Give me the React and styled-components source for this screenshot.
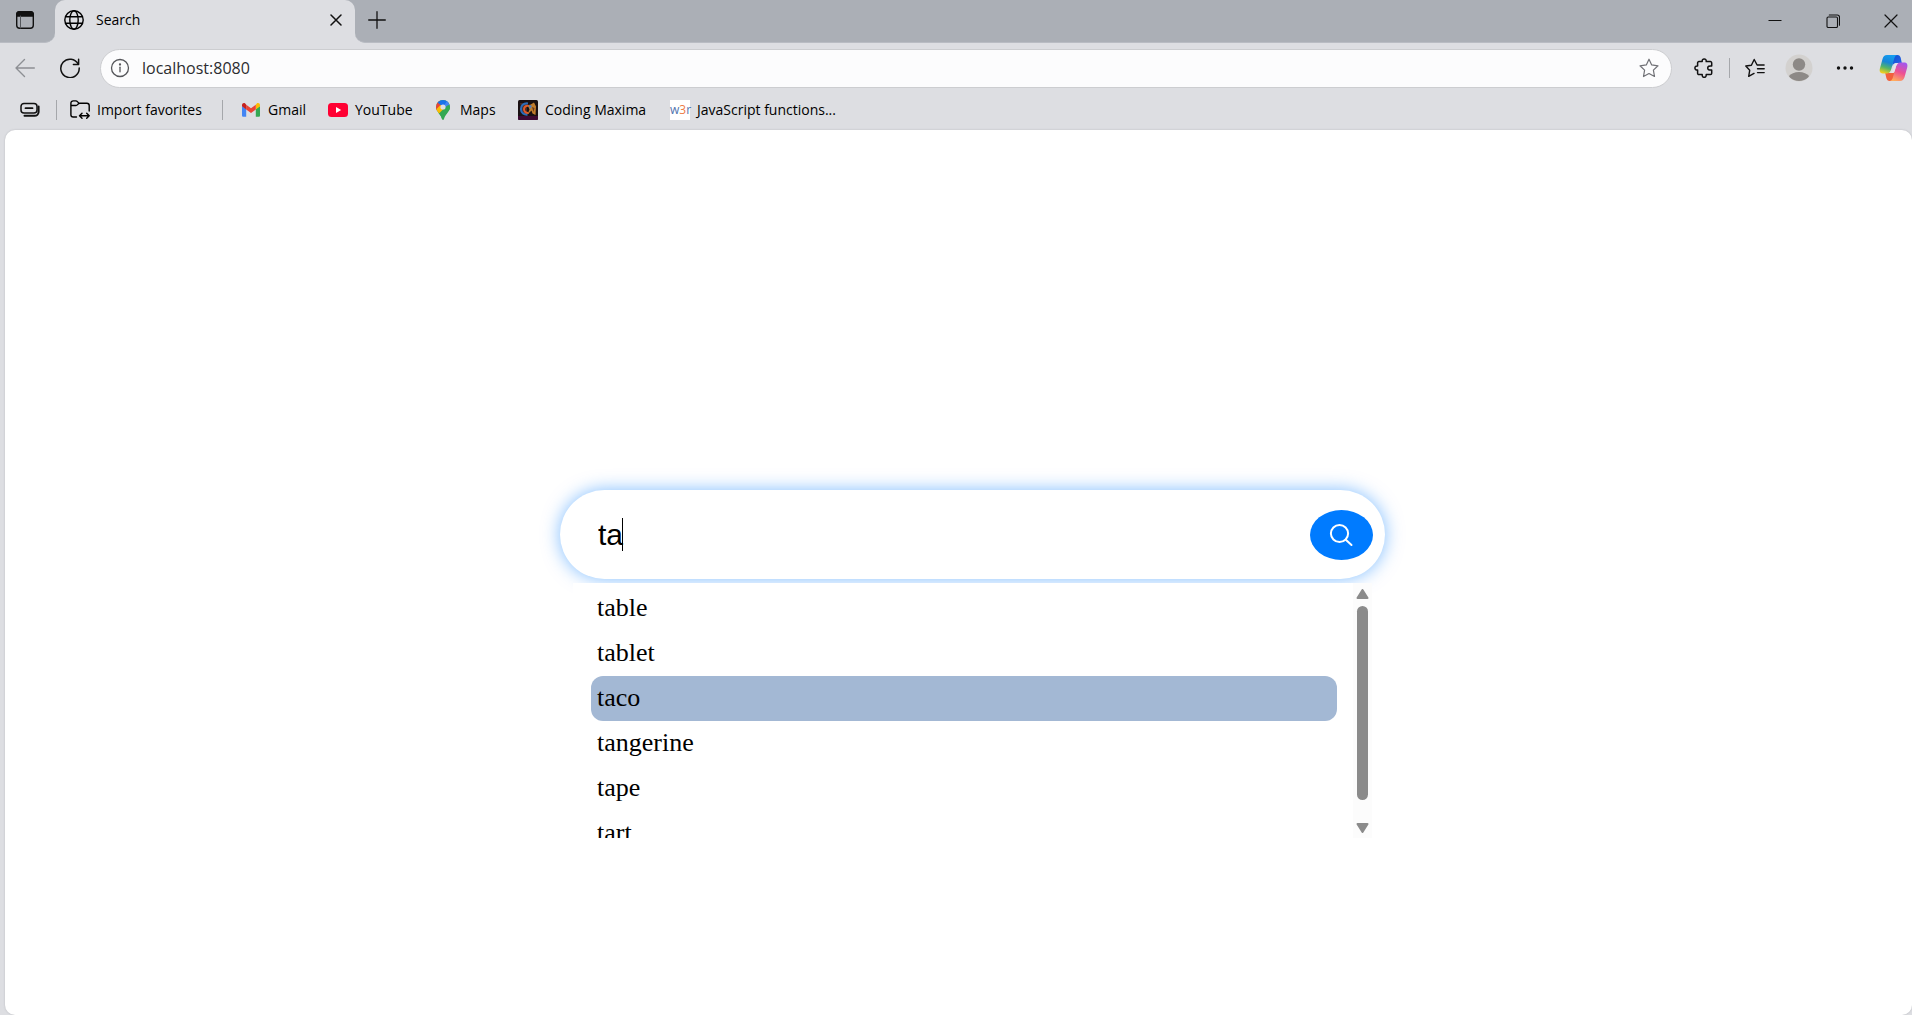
import React, { useState } from "react";
import styled, { createGlobalStyle } from "styled-components";

const Global = createGlobalStyle`
  *, *::before, *::after { box-sizing: border-box; }
  html, body { margin: 0; }
  body {
    background: #dddee2;
    color: #000;
    font-family: "Open Sans", "Noto Sans", sans-serif;
    font-size: 14px;
    overflow: hidden;
  }
`;

const Browser = styled.div`
  display: flex;
  flex-direction: column;
  height: 100vh;
`;

const IconButton = styled.button`
  display: grid;
  place-items: center;
  flex: none;
  width: ${(p) => p.$width || 20}px;
  height: ${(p) => p.$height || 20}px;
  padding: 0;
  margin: 0 0 0 ${(p) => p.$before || 0}px;
  border: 0;
  background: none;
  color: ${(p) => p.$color || "#111"};
  svg { display: block; }
`;

const TabStrip = styled.header`
  display: flex;
  flex: none;
  height: 43px;
`;

const StripStart = styled.div`
  display: flex;
  align-items: center;
  width: 55px;
  padding: 0 0 3px 15px;
  background: #abafb6;
  border-bottom: 1px solid #b9bcc3;
  border-bottom-right-radius: 10px;
`;

const TabHolder = styled.div`
  flex: none;
  width: 300px;
  height: 33px;
  background: #abafb6;
`;

const Tab = styled.div`
  display: flex;
  align-items: center;
  height: 43px;
  padding: 0 9px 3px 9px;
  background: #dddee2;
  border-radius: 10px 10px 0 0;
`;

const TabTitle = styled.span`
  flex: 1;
  padding-left: 12px;
  line-height: 20px;
`;

const StripEnd = styled.div`
  display: flex;
  flex: 1;
  align-items: center;
  justify-content: space-between;
  padding: 0 11px 3px 12px;
  background: #abafb6;
  border-bottom: 1px solid #b9bcc3;
  border-bottom-left-radius: 10px;
`;

const WindowControls = styled.div`
  display: flex;
  gap: 38px;
  padding-top: 3px;
`;

const Toolbar = styled.nav`
  display: flex;
  align-items: center;
  flex: none;
  height: 50px;
  padding: 0 4px 0 15px;
`;

const NavButtons = styled.div`
  display: flex;
  gap: 25px;
  padding-right: 20px;
`;

const AddressBar = styled.label`
  display: flex;
  align-items: center;
  flex: 1;
  height: 39px;
  padding: 0 12px 0 9px;
  background: #fcfcfd;
  border: 1px solid #cccdd0;
  border-radius: 20px;
`;

const AddressInput = styled.input`
  flex: 1;
  min-width: 0;
  height: 30px;
  padding: 0 0 0 12px;
  border: 0;
  outline: 0;
  background: none;
  color: #2c2c30;
  font-family: inherit;
  font-size: 16px;
`;

const ToolbarActions = styled.div`
  display: flex;
  align-items: center;
  padding-left: 22px;
`;

const Divider = styled.span`
  flex: none;
  width: 1px;
  height: 20px;
  margin: ${(p) => p.$margin};
  background: #a5a7ab;
`;

const Bookmarks = styled.nav`
  display: flex;
  align-items: center;
  flex: none;
  height: 37px;
  padding: 0 20px 3px;
`;

const Bookmark = styled.a`
  display: flex;
  align-items: center;
  gap: 7px;
  flex: none;
  width: ${(p) => p.$width}px;
  color: inherit;
  line-height: 20px;
  text-decoration: none;
  white-space: nowrap;
  svg { flex: none; display: block; }
`;

const SiteMark = styled.span`
  display: grid;
  place-items: center;
  flex: none;
  width: 20px;
  height: 20px;
  background: #fff;
  color: #4f72ae;
  font-size: 12px;
  line-height: 20px;
  b { color: #ee7c45; font-weight: 400; }
`;

const Page = styled.main`
  display: flex;
  flex-direction: column;
  align-items: center;
  flex: 1;
  min-height: 0;
  margin-left: 5px;
  padding: 360px 0 0 28px;
  background: #fff;
  border-radius: 10px;
  box-shadow: 0 0 2px #b4b5ba;
`;

const SearchForm = styled.form`
  position: relative;
  display: flex;
  align-items: center;
  width: 100%;
  max-width: 825px;
  height: 89px;
  padding: 0 12px 0 38px;
  background: #fff;
  border-radius: 45px;
  box-shadow: 0 0 18px rgba(0, 123, 255, 0.5);
`;

const SearchInput = styled.input`
  flex: 1;
  min-width: 0;
  height: 50px;
  padding: 0;
  border: 0;
  outline: 0;
  background: none;
  color: #000;
  caret-color: transparent;
  font-family: "Liberation Sans", Arial, sans-serif;
  font-size: 30px;
`;

const Caret = styled.span`
  position: absolute;
  top: 28px;
  left: 62px;
  width: 1px;
  height: 33px;
  background: #000;
`;

const SearchButton = styled.button`
  display: grid;
  place-items: center;
  width: 63px;
  height: 50px;
  padding: 0 2px 0 0;
  border: 0;
  border-radius: 50%;
  background: #007bff;
  color: #fff;
`;

const Results = styled.div`
  position: relative;
  display: flex;
  width: 100%;
  max-width: 799px;
  height: 255px;
  margin-top: 4px;
  background: #fff;
`;

const ResultList = styled.ul`
  flex: 1;
  margin: 0;
  padding: 3px 16px 0 18px;
  overflow: hidden;
  list-style: none;
  font-family: "Liberation Serif", "Times New Roman", serif;
  font-size: 26px;
`;

const ResultItem = styled.li`
  height: 45px;
  padding: 0 6px;
  border-radius: 12px;
  background: ${(p) => (p.$active ? "#a3b8d4" : "transparent")};
  line-height: 44px;
`;

const Scrollbar = styled.div`
  display: flex;
  flex-direction: column;
  align-items: center;
  justify-content: space-between;
  width: 19px;
  padding: 6px 0 5px;
  background: #fcfcfc;
`;

const Track = styled.div`
  flex: 1;
  width: 11px;
  padding: 7px 0 23px;
`;

const Thumb = styled.div`
  height: 100%;
  border-radius: 6px;
  background: #8b8b8b;
`;

const Svg = ({ size = 20, sw = 1.4, children, ...rest }) => (
  <svg
    width={size}
    height={size}
    viewBox={`0 0 ${size} ${size}`}
    fill="none"
    stroke="currentColor"
    strokeWidth={sw}
    strokeLinecap="round"
    strokeLinejoin="round"
    aria-hidden="true"
    {...rest}
  >
    {children}
  </svg>
);

const TabsIcon = () => (
  <Svg>
    <rect x="1.7" y="1.7" width="16.6" height="16.6" rx="3" />
    <path d="M1.7 6V4.5a3 3 0 0 1 3-2.8h10.6a3 3 0 0 1 3 2.8V6z" fill="currentColor" />
    <path d="M5.5 6v12" stroke="#55585d" strokeWidth="1" />
  </Svg>
);

const GlobeIcon = () => (
  <Svg>
    <circle cx="10" cy="10" r="9.2" />
    <ellipse cx="10" cy="10" rx="4.2" ry="9.2" />
    <path d="M1.6 6.8h16.8M1.6 13.2h16.8" />
  </Svg>
);

const InfoIcon = () => (
  <Svg sw={1.3}>
    <circle cx="10" cy="10" r="8.5" />
    <path d="M10 9.2v4.6" />
    <circle cx="10" cy="6.5" r=".5" fill="currentColor" />
  </Svg>
);

const ReloadIcon = () => (
  <Svg sw={1.5}>
    <path d="M18.2 6.2A9.2 9.2 0 1 0 19.2 10" />
    <path d="M18.6 1.2v5.2h-5.2" />
  </Svg>
);

const StarIcon = () => (
  <Svg sw={1.2}>
    <path d="M10 1.2l2.7 5.7 6.3.9-4.6 4.3 1.1 6.4-5.5-3-5.5 3 1.1-6.4L1 7.8l6.3-.9z" />
  </Svg>
);

const PuzzleIcon = () => (
  <Svg sw={1.5}>
    <path d="M4.9 3.600H8.200C8 1.900 8.800.9 10.200.9s2.200 1 2 2.700h4.200a1.300 1.300 0 0 1 1.300 1.300v3.100c-2.600-.4-4 .4-4 2s1.400 2.400 4 2v3.300a1.300 1.300 0 0 1-1.300 1.300h-4.200c.2 1.700-.6 2.700-2 2.700s-2.200-1-2-2.700H4.900a1.300 1.300 0 0 1-1.300-1.300V12C2 12.200.900 11.400.900 10S2 7.800 3.600 8V4.900a1.300 1.300 0 0 1 1.300-1.300z" />
  </Svg>
);

const FavoritesIcon = () => (
  <Svg>
    <path d="M9 15.400l-5.300 2.900 1-6L.8 8l5.600-.8L9.200 1.500l2.900 5.500h7M12.500 10.800h6.700M12.500 14.600h6.700" />
  </Svg>
);

const CopilotIcon = () => (
  <svg width="29" height="28" viewBox="0 0 29 28" aria-hidden="true">
    <defs>
      <linearGradient id="cpBlue" x1="0.600" y1="0" x2="0.300" y2="1">
        <stop offset="0" stopColor="#149df0" />
        <stop offset=".4" stopColor="#1785d8" />
        <stop offset=".7" stopColor="#54b567" />
        <stop offset="1" stopColor="#f2cf1e" />
      </linearGradient>
      <linearGradient id="cpPink" x1="0.700" y1="0" x2="0.300" y2="1">
        <stop offset="0" stopColor="#a457ec" />
        <stop offset=".5" stopColor="#ee5092" />
        <stop offset="1" stopColor="#ffae5c" />
      </linearGradient>
      <linearGradient id="cpDeep" x1="0" y1="0" x2="1" y2="1">
        <stop offset="0" stopColor="#0f4fd0" />
        <stop offset="1" stopColor="#2a67ea" />
      </linearGradient>
    </defs>
    <path d="M14 1h4.500c1.800 0 2.700 1.200 3.200 2.800L22.800 9h-5c-3 0-4 1.400-4.500 3.200z" fill="url(#cpDeep)" />
    <path d="M15 27h-4.400c-1.800 0-2.700-1.200-3.200-2.800L6.200 19H12c3 0 4-1.400 4.500-3.200z" fill="#f2603c" />
    <path d="M8 1h10.500c-2.500.3-3 2.600-3.600 4.800L12.300 15c-.8 2.700-1.900 4.500-4.800 4.500H3.800C1 19.500.200 17.300.900 14.600L3.600 4.800C4.200 2.400 5.600 1 8 1z" fill="url(#cpBlue)" />
    <path d="M21 27H10.600c2.500-.3 3-2.600 3.600-4.800L16.800 13c.8-2.700 1.900-4.500 4.800-4.500h3.700c2.800 0 3.600 2.200 2.900 4.900l-2.700 9.800C24.800 25.600 23.400 27 21 27z" fill="url(#cpPink)" />
    <path d="M16.600 9.300h2.800c-1.400.8-2 2.200-2.500 3.700l-1.600 5.200c-.2.500-.7.800-1.200.8h-2.500c1.300-.8 1.900-2 2.300-3.500l1.500-5.200c.2-.6.600-1 1.200-1z" fill="#e6e4ea" />
  </svg>
);

const AvatarIcon = () => (
  <svg width="28" height="28" viewBox="0 0 28 28" aria-hidden="true">
    <defs>
      <clipPath id="avatarClip"><circle cx="14" cy="14" r="13" /></clipPath>
    </defs>
    <circle cx="14" cy="14" r="13.500" fill="#d3d1cf" />
    <g clipPath="url(#avatarClip)" fill="#8d8986">
      <circle cx="14" cy="10.500" r="6.200" />
      <path d="M3.500 22.500c2.500-3 6-4.500 10.500-4.500s8 1.500 10.500 4.500L22 28H6z" />
    </g>
  </svg>
);

const StackIcon = () => (
  <Svg sw={1.500}>
    <rect x="1" y="3.500" width="16" height="9.500" rx="3" />
    <path d="M5.500 8.200h7" strokeWidth="1.800" />
    <path d="M18.600 6.500v5.500a4 4 0 0 1-4 3.800H4.500" strokeWidth="2" />
  </Svg>
);

const ImportIcon = () => (
  <Svg>
    <path d="M6.500 17H3.200A2.300 2.300 0 0 1 .9 14.700V3.200A2.300 2.300 0 0 1 3.200.9h2.500c2 0 2.300 2.300 4 2.300h7.200a2.300 2.300 0 0 1 2.300 2.300V11M.9 5.500h5c1.800 0 2-2.300 3.800-2.300" />
    <path d="M9.800 15.800h9M12 13.300l-2.500 2.500 2.500 2.500M16.700 13.300l2.500 2.500-2.500 2.500" />
  </Svg>
);

const GmailIcon = () => (
  <svg width="20" height="20" viewBox="0 0 20 20" aria-hidden="true">
    <path d="M1 6v9.500c0 .8.600 1.300 1.300 1.300h2.900V9z" fill="#4285f4" />
    <path d="M14.800 16.800h2.900c.8 0 1.300-.6 1.300-1.300V6l-4.200 3z" fill="#34a853" />
    <path d="M14.800 4.700V9.400L19 6.300V5c0-1.800-2-2.500-3.200-1.500z" fill="#fbbc04" />
    <path d="M5.200 9.400V4.700l4.800 3.600 4.800-3.600v4.700L10 13z" fill="#ea4335" />
    <path d="M1 5v1.300l4.200 3.100V4.700l-1-1.200C3 2.500 1 3.200 1 5z" fill="#c5221f" />
  </svg>
);

const YouTubeIcon = () => (
  <svg width="20" height="20" viewBox="0 0 20 20" aria-hidden="true">
    <rect y="3" width="20" height="14" rx="3.500" fill="#ff0033" />
    <path d="M8 7l5.200 3L8 13z" fill="#fff" />
  </svg>
);

const MapsIcon = () => (
  <svg width="20" height="20" viewBox="0 0 20 20" aria-hidden="true">
    <defs>
      <clipPath id="pin">
        <path d="M10 0a7 7 0 0 1 7 7c0 2.500-1.200 4.200-3 6.500-1.600 2-2.500 3.600-3.100 5.700-.3 1-1.500 1-1.800 0C8.500 17.100 7.600 15.500 6 13.500 4.200 11.200 3 9.500 3 7a7 7 0 0 1 7-7z" />
      </clipPath>
    </defs>
    <g clipPath="url(#pin)">
      <path d="M0 0h20v20H0z" fill="#34a853" />
      <path d="M0 10L0 0h6l4 7-5.500 4z" fill="#ea4335" />
      <path d="M5 0h9l2 2.500L10 7 4.500 2.500z" fill="#1a73e8" />
      <path d="M14 1l3 4-4.500 4L10 7z" fill="#4285f4" />
      <path d="M3 14L14.500 5.500 18 4v4L8 20z" fill="#34a853" />
      <path d="M3 9.500L7.500 5l3 4L5.500 14z" fill="#fbbc04" />
    </g>
    <circle cx="10" cy="7" r="2.600" fill="#dddee2" />
  </svg>
);

const MaximaIcon = () => (
  <svg width="20" height="20" viewBox="0 0 20 20" aria-hidden="true">
    <rect width="20" height="20" rx="1.500" fill="#1a1012" />
    <path d="M0 16h20v2.500a1.500 1.500 0 0 1-1.500 1.500h-17A1.500 1.500 0 0 1 0 18.500z" fill="#3e0b33" />
    <path d="M2 3h7v11H5z" fill="#4a2a22" />
    <path d="M10 3.500C5.500 3 2.800 5.500 3 9.200s3 5.700 6.500 5.400" fill="none" stroke="#2c6bb8" strokeWidth="2.200" />
    <path d="M11 6C8 5 6 7 6 9.300s2 4 4.600 3.700" fill="none" stroke="#e05a2a" strokeWidth="2" />
    <path d="M10 6l6-3.500 2 4-.5 8.500-3-1.500-1-3-4 4 2-5z" fill="#c07c2c" />
    <path d="M11 4.500l3 1.500-2 3z" fill="#4b7fc0" />
    <path d="M14 7l2.500 1-1 4z" fill="#6a3a1c" />
  </svg>
);

const words = ["table", "tablet", "taco", "tangerine", "tape", "tart"];

export default function App() {
  const [query, setQuery] = useState("ta");
  return (
    <Browser>
      <Global />
      <TabStrip>
        <StripStart>
          <IconButton aria-label="Tab actions"><TabsIcon /></IconButton>
        </StripStart>
        <TabHolder>
          <Tab>
            <GlobeIcon />
            <TabTitle>Search</TabTitle>
            <IconButton aria-label="Close tab">
              <Svg size={12} sw={1.5}><path d="M1 1l10 10M11 1L1 11" /></Svg>
            </IconButton>
          </Tab>
        </TabHolder>
        <StripEnd>
          <IconButton aria-label="New tab">
            <Svg size={18} sw={1.3}><path d="M9 .7v16.600M.700 9h16.600" /></Svg>
          </IconButton>
          <WindowControls>
            <IconButton aria-label="Minimize">
              <Svg size={14} sw={1} strokeLinecap="butt"><path d="M.5 6.500h13" /></Svg>
            </IconButton>
            <IconButton aria-label="Restore">
              <Svg size={14} sw={1.100}>
                <rect x="1" y="3" width="10.500" height="10.500" rx="1.200" />
                <path d="M3.300 1h8a2.200 2.200 0 0 1 2.200 2.200v8" />
              </Svg>
            </IconButton>
            <IconButton aria-label="Close window">
              <Svg size={14} sw={1.200}><path d="M1 1l12 12M13 1L1 13" /></Svg>
            </IconButton>
          </WindowControls>
        </StripEnd>
      </TabStrip>

      <Toolbar aria-label="Browser toolbar">
        <NavButtons>
          <IconButton aria-label="Back" $color="#8d8f94">
            <Svg><path d="M19.300 10H1M9.500 1.500L1 10l8.500 8.500" /></Svg>
          </IconButton>
          <IconButton aria-label="Refresh"><ReloadIcon /></IconButton>
        </NavButtons>
        <AddressBar>
          <IconButton as="span" $color="#55565a"><InfoIcon /></IconButton>
          <AddressInput aria-label="Address" defaultValue="localhost:8080" />
          <IconButton aria-label="Add to favorites" $color="#707176"><StarIcon /></IconButton>
        </AddressBar>
        <ToolbarActions>
          <IconButton aria-label="Extensions"><PuzzleIcon /></IconButton>
          <Divider $margin="0 15px" />
          <IconButton aria-label="Favorites"><FavoritesIcon /></IconButton>
          <IconButton aria-label="Profile" $width={68} $height={28}><AvatarIcon /></IconButton>
          <IconButton aria-label="Settings and more" $width={24}>
            <Svg sw={0}>
              <g fill="currentColor">
                <circle cx="3.500" cy="10" r="1.700" />
                <circle cx="10" cy="10" r="1.700" />
                <circle cx="16.500" cy="10" r="1.700" />
              </g>
            </Svg>
          </IconButton>
          <IconButton aria-label="Copilot" $width={30} $height={28} $before={21}><CopilotIcon /></IconButton>
        </ToolbarActions>
      </Toolbar>

      <Bookmarks aria-label="Favorites bar">
        <IconButton aria-label="Workspaces"><StackIcon /></IconButton>
        <Divider $margin="0 13px 0 16px" />
        <Bookmark href="#import" $width={136}><ImportIcon />Import favorites</Bookmark>
        <Divider $margin="0 18px 0 16px" />
        <Bookmark href="#gmail" $width={87}><GmailIcon />Gmail</Bookmark>
        <Bookmark href="#youtube" $width={105}><YouTubeIcon />YouTube</Bookmark>
        <Bookmark href="#maps" $width={85}><MapsIcon />Maps</Bookmark>
        <Bookmark href="#maxima" $width={152}><MaximaIcon />Coding Maxima</Bookmark>
        <Bookmark href="#javascript" $width={180}>
          <SiteMark><span>w<b>3</b>r</span></SiteMark>JavaScript functions...
        </Bookmark>
      </Bookmarks>

      <Page>
        <SearchForm onSubmit={(e) => e.preventDefault()}>
          <SearchInput aria-label="Search" value={query} onChange={(e) => setQuery(e.target.value)} />
          <Caret />
          <SearchButton aria-label="Search">
            <Svg size={24} sw={2}>
              <circle cx="10.500" cy="10.500" r="8.600" />
              <path d="M16.800 16.800l5.700 5.200" />
            </Svg>
          </SearchButton>
        </SearchForm>
        <Results>
          <ResultList>
            {words.map((word) => (
              <ResultItem key={word} $active={word === "taco"}>{word}</ResultItem>
            ))}
          </ResultList>
          <Scrollbar aria-hidden="true">
            <svg width="13" height="10" viewBox="0 0 13 10"><path d="M6.500 1l5 8h-10z" fill="#8b8b8b" stroke="#8b8b8b" strokeWidth="2" strokeLinejoin="round" /></svg>
            <Track><Thumb /></Track>
            <svg width="13" height="10" viewBox="0 0 13 10"><path d="M6.500 9l5-8h-10z" fill="#8b8b8b" stroke="#8b8b8b" strokeWidth="2" strokeLinejoin="round" /></svg>
          </Scrollbar>
        </Results>
      </Page>
    </Browser>
  );
}
